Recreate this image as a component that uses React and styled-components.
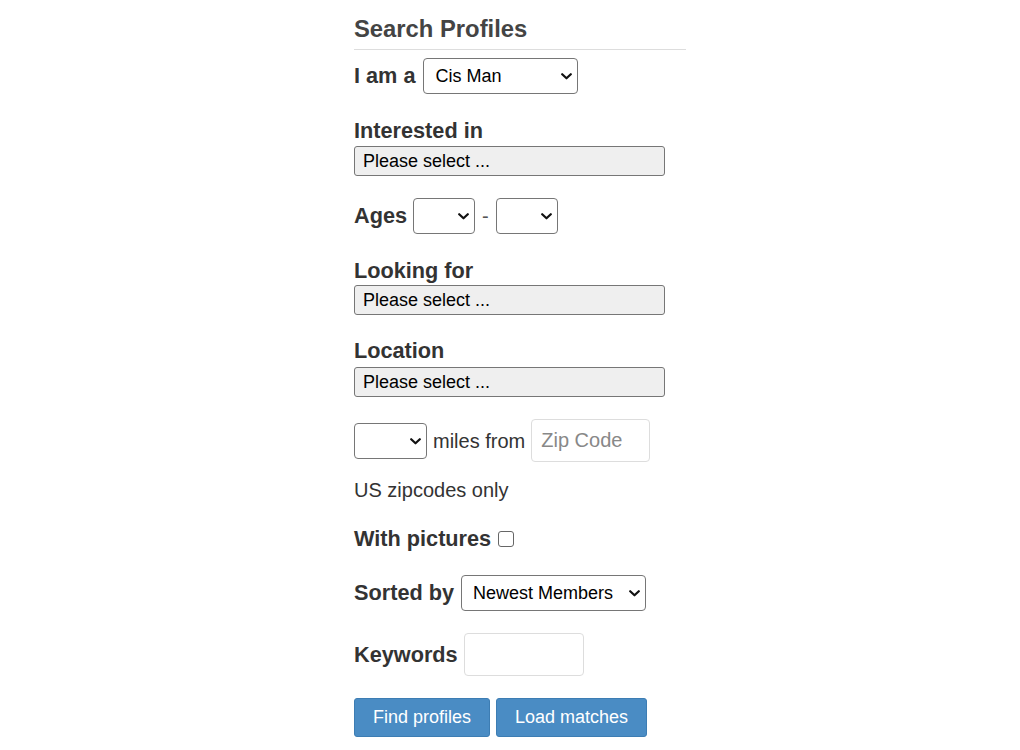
import React from "react";
import styled, { createGlobalStyle } from "styled-components";

const Global = createGlobalStyle`
  html, body { margin: 0; padding: 0; background: #fff; }
  body { font-family: "Liberation Sans", Arial, sans-serif; color: #333; }
`;

const Panel = styled.form`
  width: 332px;
  margin-left: 354px;
  padding-top: 15px;
  display: flex;
  flex-direction: column;
  font-size: 20px;
  line-height: 24px;
`;

const Heading = styled.h2`
  margin: 0;
  font-size: 23.8px;
  line-height: 28px;
  font-weight: bold;
  color: #444;
  padding-bottom: 6px;
  border-bottom: 1px solid #ddd;
`;

const Row = styled.div`
  display: flex;
  align-items: center;
  margin-top: ${(p) => p.$mt || 0}px;
`;

const Field = styled.div`
  display: flex;
  flex-direction: column;
  align-items: flex-start;
  margin-top: ${(p) => p.$mt || 0}px;
`;

const Label = styled.label`
  font-size: 21.7px;
  line-height: 24px;
  font-weight: bold;
  color: #333;
  margin-right: ${(p) => (p.$gap != null ? p.$gap : 0)}px;
  margin-bottom: ${(p) => p.$mb || 0}px;
`;

const SelectWrap = styled.div`
  position: relative;
  width: ${(p) => p.$w}px;
  height: 36px;
`;

const Select = styled.select`
  appearance: none;
  -webkit-appearance: none;
  width: 100%;
  height: 100%;
  box-sizing: border-box;
  border: 1px solid #767676;
  border-radius: 4px;
  background: #fff;
  font-family: "Liberation Sans", Arial, sans-serif;
  font-size: 18px;
  color: #000;
  padding: 0 24px 0 11px;
  outline: none;
`;

const Chevron = styled.svg`
  position: absolute;
  right: 6px;
  top: 50%;
  margin-top: -3px;
  width: 11px;
  height: 7px;
  pointer-events: none;
`;

const MultiButton = styled.button`
  width: 311px;
  height: 30px;
  box-sizing: border-box;
  background: #efefef;
  border: 1px solid #767676;
  border-radius: 3px;
  text-align: left;
  padding: 0 8px;
  font-family: "Liberation Sans", Arial, sans-serif;
  font-size: 18px;
  color: #000;
`;

const Dash = styled.span`
  margin: 0 7px;
  color: #555;
`;

const Text = styled.span`
  color: #333;
  margin: 0 6px;
`;

const Input = styled.input`
  width: ${(p) => p.$w}px;
  height: 43px;
  box-sizing: border-box;
  border: 1px solid #ddd;
  border-radius: 4px;
  padding: 0 9px;
  font-family: "Liberation Sans", Arial, sans-serif;
  font-size: 20px;
  color: #333;
  outline: none;
  &::placeholder { color: #888; }
`;

const Note = styled.div`
  margin-top: ${(p) => p.$mt || 0}px;
  color: #333;
`;

const Check = styled.span`
  display: inline-block;
  width: 14px;
  height: 14px;
  border: 1px solid #666;
  border-radius: 3px;
  background: #fff;
`;

const Buttons = styled.div`
  display: flex;
  gap: 6px;
  margin-top: 22px;
`;

const Btn = styled.button`
  height: 39px;
  box-sizing: border-box;
  padding: 0 18px;
  background: #4a8cc4;
  border: 1px solid #3d7db3;
  border-radius: 3px;
  color: #fff;
  font-family: "Liberation Sans", Arial, sans-serif;
  font-size: 18px;
`;

function Sel({ w, value }) {
  return (
    <SelectWrap $w={w}>
      <Select defaultValue={value || ""}>
        <option value={value || ""}>{value || ""}</option>
      </Select>
      <Chevron viewBox="0 0 11 7">
        <path d="M1.2 1.2 L5.5 5.3 L9.8 1.2" fill="none" stroke="#111" strokeWidth="2.2" strokeLinecap="round" strokeLinejoin="round" />
      </Chevron>
    </SelectWrap>
  );
}

export default function App() {
  return (
    <>
      <Global />
      <Panel onSubmit={(e) => e.preventDefault()}>
        <Heading>Search Profiles</Heading>
        <Row $mt={8}>
          <Label $gap={8}>I am a</Label>
          <Sel w={155} value="Cis Man" />
        </Row>
        <Field $mt={25}>
          <Label $mb={3}>Interested in</Label>
          <MultiButton type="button">Please select ...</MultiButton>
        </Field>
        <Row $mt={22}>
          <Label $gap={6}>Ages</Label>
          <Sel w={62} />
          <Dash>-</Dash>
          <Sel w={62} />
        </Row>
        <Field $mt={25}>
          <Label $mb={2}>Looking for</Label>
          <MultiButton type="button">Please select ...</MultiButton>
        </Field>
        <Field $mt={24}>
          <Label $mb={4}>Location</Label>
          <MultiButton type="button">Please select ...</MultiButton>
        </Field>
        <Row $mt={22}>
          <Sel w={73} />
          <Text>miles from</Text>
          <Input $w={119} placeholder="Zip Code" />
        </Row>
        <Note $mt={16}>US zipcodes only</Note>
        <Row $mt={25}>
          <Label $gap={7}>With pictures</Label>
          <Check />
        </Row>
        <Row $mt={24}>
          <Label $gap={7}>Sorted by</Label>
          <Sel w={185} value="Newest Members" />
        </Row>
        <Row $mt={22}>
          <Label $gap={6}>Keywords</Label>
          <Input $w={120} />
        </Row>
        <Buttons>
          <Btn type="submit">Find profiles</Btn>
          <Btn type="button">Load matches</Btn>
        </Buttons>
      </Panel>
    </>
  );
}
